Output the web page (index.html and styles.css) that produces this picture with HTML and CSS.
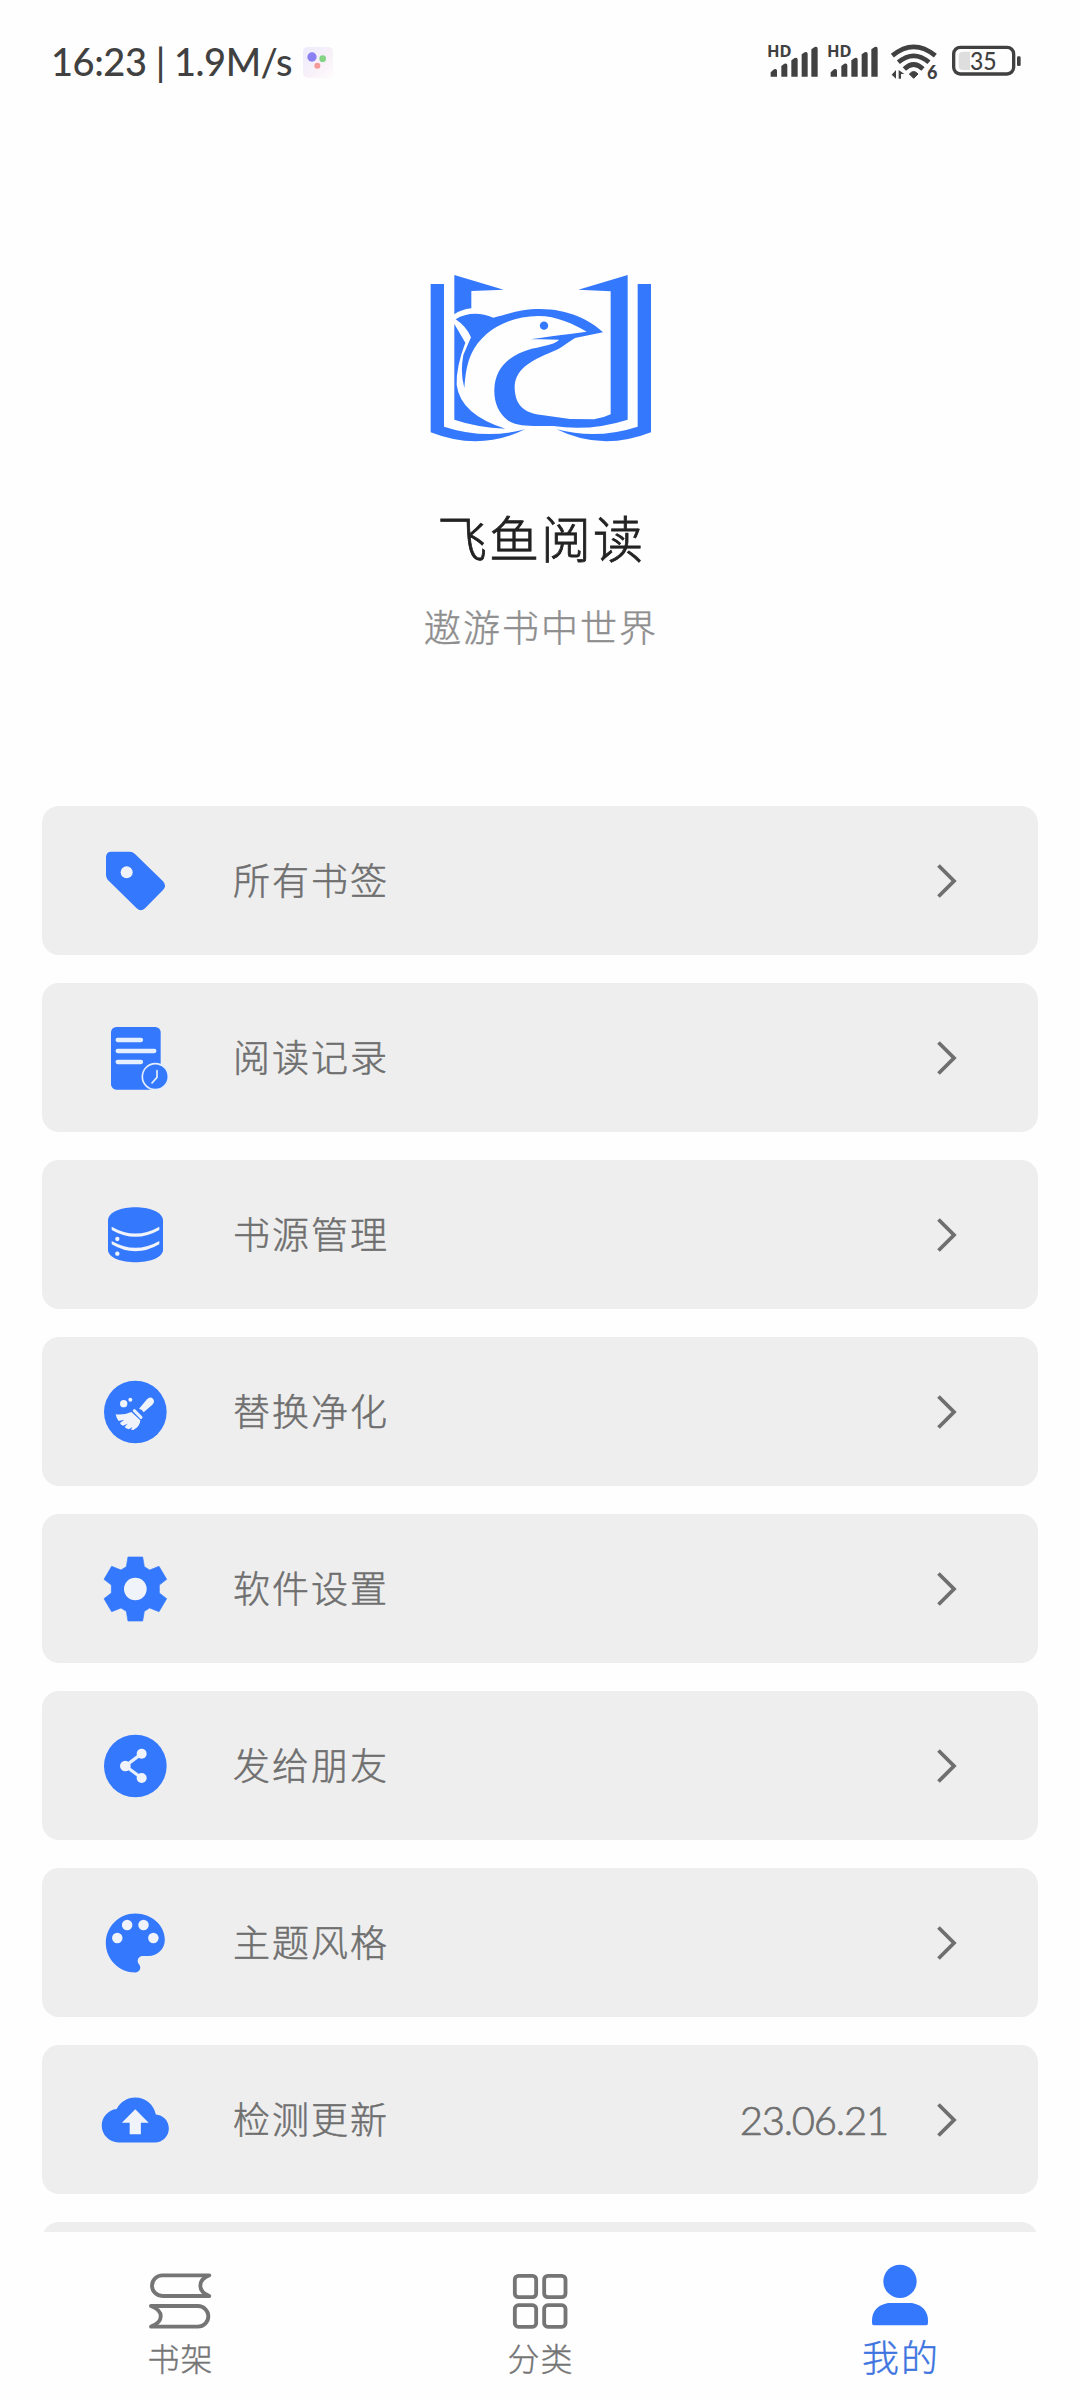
FILE: index.html
```html
<!DOCTYPE html>
<html lang="zh-CN">
<head>
<meta charset="utf-8">
<title>飞鱼阅读</title>
<link rel="stylesheet" href="styles.css">
</head>
<body>
<div class="app">
  <header class="status">
    <div class="status-left">
      <span class="clock">16:23 | 1.9M/s</span>
      <svg class="dots" viewBox="0 0 96 96">
        <defs><linearGradient id="tile" x1="0" y1="0" x2="1" y2="1"><stop offset="0" stop-color="#ecebff"/><stop offset=".6" stop-color="#f9f1f8"/><stop offset="1" stop-color="#fefcfc"/></linearGradient></defs>
        <rect width="90" height="92" rx="14" fill="url(#tile)"/>
        <circle cx="27" cy="30" r="14" fill="#8a80f2"/><circle cx="59" cy="35" r="10" fill="#84d486"/><circle cx="43" cy="56" r="9" fill="#f59a98"/>
      </svg>
    </div>
    <svg class="status-icons" viewBox="0 0 900 240">
      <g fill="#414141">
        <g id="sim">
          <text class="hd" x="51" y="110" textLength="74" lengthAdjust="spacingAndGlyphs">HD</text>
          <path d="M62 170V157L72 148Q81 144 81 153V170ZM94 170V138L103 131Q112 128 112 136V170ZM124 170V121L134 114Q143 111 143 119V170ZM155 170V103L164 97Q173 94 173 102V170ZM184 170V88L194 81Q203 78 203 87V170Z"/>
        </g>
        <use href="#sim" x="180"/>
        <path d="M491 175L478 162Q491 147 504 162Z" stroke="#414141" stroke-width="3"/>
        <path d="M438 150V176L425 164ZM446 176V150L463 162H453V176Z"/>
        <text class="six" x="531" y="178">6</text>
        <rect x="801" y="109" width="11" height="29" rx="4"/>
      </g>
      <g fill="none" stroke="#414141" stroke-width="14">
        <path d="M427 107Q491 54 556 107M445 127Q491 88 537 127M463 147Q491 120 519 147"/>
        <rect x="611" y="82" width="180" height="80" rx="20" stroke-width="10"/>
      </g>
      <path d="M640 95H660V150H640Q626 150 626 138V108Q626 95 640 95Z" fill="#dedede"/>
      <text class="pct" x="700" y="151" text-anchor="middle" textLength="80" lengthAdjust="spacingAndGlyphs">35</text>
    </svg>
  </header>

  <section class="hero">
    <svg class="logo" viewBox="0 0 780 600">
      <path d="M62 72H102V500Q225 540 345 508Q210 575 62 517Z"/>
      <path d="M723 72H683V500Q560 540 440 508Q575 575 723 517Z"/>
      <path d="M133 45L281 89L184 93V145Q152 149 133 163Z"/>
      <path d="M133 192L166 248Q138 320 140 375Q152 464 286 506Q200 502 133 479Z"/>
      <path d="M137 178C168 158 210 156 250 173C300 160 335 147 390 147C475 147 540 180 579 217L495 234C465 252 455 264 430 274C355 305 314 330 314 385C316 435 340 460 400 466L480 477L552 478Q580 474 602 463V94L505 89L653 45V479Q540 515 430 498C370 497 330 502 296 483C264 460 252 425 253 388C256 318 302 284 365 266C410 257 440 250 447 239Q405 237 362 238Q430 228 480 222L530 215C490 192 440 168 385 168C285 170 215 218 185 280C170 312 166 345 163 384Q150 340 160 285L183 232Q170 200 137 178Z"/>
      <circle cx="402" cy="197" r="12.5"/>
    </svg>
    <h1 class="title">飞鱼阅读</h1>
    <p class="subtitle">遨游书中世界</p>
  </section>

  <main class="list">
    <div class="card">
      <svg class="icon" viewBox="0 0 240 240"><path d="M49 32H104Q113 32 120 39L204 121Q216 134 204 147L150 202Q138 214 125 202L38 116Q33 110 33 102V49Q33 32 49 32Z"/><circle class="cut" cx="95" cy="94" r="18"/></svg>
      <span class="label">所有书签</span>
      <svg class="chevron" viewBox="0 0 20 34"><path d="M1.500 1.500L17 17L1.500 32.500"/></svg>
    </div>
    <div class="card">
      <svg class="icon" viewBox="0 0 240 240"><rect x="48" y="27" width="149" height="188" rx="16"/><path class="line" stroke-width="13" d="M68 66H138M68 99H178M68 132H138"/><circle cx="181" cy="176" r="39" stroke="#e4eeff" stroke-width="5"/><path class="line" stroke-width="5" d="M186 158V178L171 195"/></svg>
      <span class="label">阅读记录</span>
      <svg class="chevron" viewBox="0 0 20 34"><path d="M1.500 1.500L17 17L1.500 32.500"/></svg>
    </div>
    <div class="card">
      <svg class="icon" viewBox="0 0 240 240"><path d="M39 75C43 24 199 24 204 75V166C199 214 43 214 39 166Z"/><path class="cut" d="M50 95Q121 136 193 95V105Q121 146 50 105ZM50 138Q121 179 193 138V148Q121 190 50 148Z"/><circle class="cut" cx="67" cy="132" r="6.500"/><circle class="cut" cx="67" cy="176" r="6.500"/></svg>
      <span class="label">书源管理</span>
      <svg class="chevron" viewBox="0 0 20 34"><path d="M1.500 1.500L17 17L1.500 32.500"/></svg>
    </div>
    <div class="card">
      <svg class="icon" viewBox="0 0 240 240"><circle cx="121" cy="120" r="94"/><circle class="cut" cx="86" cy="95" r="11"/><circle class="cut" cx="106" cy="83" r="6"/><path class="cut" d="M132 110L156 82Q165 72 174 80Q181 89 172 98L146 121Q142 112 132 110Z"/><path class="line" stroke-width="9" d="M118 116L138 136"/><path class="cut" d="M109 120L136 145Q135 164 115 174L108 173L112 165L102 172Q91 169 89 165L98 155L84 161Q76 158 75 153L88 143L71 147Q64 139 62 127Q86 130 109 120Z"/></svg>
      <span class="label">替换净化</span>
      <svg class="chevron" viewBox="0 0 20 34"><path d="M1.500 1.500L17 17L1.500 32.500"/></svg>
    </div>
    <div class="card">
      <svg class="icon" viewBox="-121 -120 240 240"><path stroke="#3478fd" stroke-width="2" stroke-linejoin="round" d="M-22-96H22L27-67L43-57L71-68L94-29L72-12V12L94 29L71 68L43 57L27 67L22 96H-22L-27 67L-43 57L-71 68L-94 29L-72 12V-12L-94-29L-71-68L-43-57L-27-67Z"/><circle class="cut" r="34"/></svg>
      <span class="label">软件设置</span>
      <svg class="chevron" viewBox="0 0 20 34"><path d="M1.500 1.500L17 17L1.500 32.500"/></svg>
    </div>
    <div class="card">
      <svg class="icon" viewBox="-121 -120 240 240"><circle r="94"/><path class="line" stroke-width="10" d="M19-37L-30 0L19 36"/><circle class="cut" cx="19" cy="-37" r="15"/><circle class="cut" cx="-30" cy="0" r="16"/><circle class="cut" cx="19" cy="36" r="15"/></svg>
      <span class="label">发给朋友</span>
      <svg class="chevron" viewBox="0 0 20 34"><path d="M1.500 1.500L17 17L1.500 32.500"/></svg>
    </div>
    <div class="card">
      <svg class="icon" viewBox="-0.300 -0.200 24.400 24.400"><path d="M12 3c-4.970 0-9 4.030-9 9s4.030 9 9 9c.83 0 1.500-.67 1.500-1.500 0-.39-.15-.74-.39-1.010-.23-.26-.38-.61-.38-.99 0-.83.67-1.500 1.500-1.500H16c2.760 0 5-2.240 5-5 0-4.420-4.030-8-9-8z"/><g class="cut"><circle cx="6.500" cy="10.500" r="1.600"/><circle cx="9.500" cy="6.500" r="1.600"/><circle cx="14.500" cy="6.500" r="1.600"/><circle cx="17.500" cy="10.500" r="1.600"/></g></svg>
      <span class="label">主题风格</span>
      <svg class="chevron" viewBox="0 0 20 34"><path d="M1.500 1.500L17 17L1.500 32.500"/></svg>
    </div>
    <div class="card">
      <svg class="icon" viewBox="-2.400 -2.300 28.600 28.600"><path d="M19.350 10.040C18.670 6.590 15.640 4 12 4 9.110 4 6.600 5.640 5.350 8.040 2.340 8.360 0 10.910 0 14c0 3.310 2.690 6 6 6h13c2.760 0 5-2.240 5-5 0-2.640-2.050-4.780-4.650-4.960z"/><path class="cut" d="M14 13v4.100h-4v-4.100H7.200l4.800-4.800 4.800 4.800z"/></svg>
      <span class="label">检测更新</span>
      <span class="value">23.06.21</span>
      <svg class="chevron" viewBox="0 0 20 34"><path d="M1.500 1.500L17 17L1.500 32.500"/></svg>
    </div>
    <div class="card"></div>
  </main>

  <nav class="tabs">
    <a class="tab">
      <svg class="tab-icon" viewBox="0 0 240 240"><path class="outline" d="M208 64H67a31 31 0 0 0 0 62H208C172 112 172 78 208 64ZM33 156H174a31 31 0 0 1 0 62H33C72 204 72 170 33 156Z"/></svg>
      <span>书架</span>
    </a>
    <a class="tab">
      <svg class="tab-icon" viewBox="0 0 240 240"><g class="outline"><rect x="44.500" y="65.500" width="64" height="64" rx="11"/><rect x="132.500" y="65.500" width="64" height="64" rx="11"/><rect x="44.500" y="153.500" width="64" height="65" rx="11"/><rect x="132.500" y="153.500" width="64" height="65" rx="11"/></g></svg>
      <span>分类</span>
    </a>
    <a class="tab active">
      <svg class="tab-icon" viewBox="0 0 240 240"><circle cx="120" cy="82" r="50"/><path d="M36 206V198Q38 156 84 147H156Q202 156 204 198V206Q204 214 198 214H42Q36 214 36 206Z"/></svg>
      <span>我的</span>
    </a>
  </nav>
</div>
</body>
</html>
```

FILE: styles.css
```css
body {
  margin: 0;
  background: #fefefe;
  font-family: "Noto Sans CJK SC", sans-serif;
  font-weight: 300;
}

.app {
  display: flex;
  flex-direction: column;
  width: 1080px;
  height: 2400px;
  overflow: hidden;
}

.status {
  display: flex;
  justify-content: space-between;
  align-items: flex-start;
  height: 100px;
  padding: 20px 30px 0 51px;
  box-sizing: border-box;
}

.status-left {
  display: flex;
  gap: 12px;
}

.clock {
  width: 240px;
  font: 500 38px/82px Lato, sans-serif;
  letter-spacing: -.45px;
  color: #414141;
  white-space: nowrap;
}

.dots {
  width: 32px;
  height: 32px;
  margin-top: 27px;
}

.status-icons {
  width: 300px;
  height: 80px;
}

.hd {
  font: 700 48px "Noto Sans", sans-serif;
}

.six {
  font: 900 54px Lato, sans-serif;
}

.pct {
  font: 500 74px Lato, sans-serif;
  fill: #414141;
}

.hero {
  display: flex;
  flex-direction: column;
  align-items: center;
  height: 706px;
  padding-top: 160px;
  box-sizing: border-box;
}

.logo {
  width: 260px;
  height: 200px;
  fill: #3478fd;
}

.title {
  margin: 41px 0 0;
  font-size: 50px;
  font-weight: 300;
  line-height: 70px;
  letter-spacing: 2px;
  text-indent: 2px;
  color: #222;
  -webkit-text-stroke: .8px;
}

.subtitle {
  margin: 27px 0 0;
  font-size: 37px;
  line-height: 56px;
  letter-spacing: 2px;
  text-indent: 2px;
  color: #8e8e8e;
  -webkit-text-stroke: .4px;
}

.list {
  display: flex;
  flex-direction: column;
  gap: 28px;
  height: 1426px;
  padding: 0 42px;
  overflow: hidden;
}

.card {
  display: flex;
  flex: none;
  align-items: center;
  height: 149px;
  padding: 0 81px 0 53px;
  box-sizing: border-box;
  border-radius: 17px;
  background: #eee;
}

.icon {
  width: 80px;
  height: 80px;
  fill: #3478fd;
}

.cut {
  fill: #f0f3fa;
}

.line {
  fill: none;
  stroke: #e6effd;
  stroke-linecap: round;
  stroke-linejoin: round;
}

.label {
  flex: 1;
  margin-left: 58px;
  padding-bottom: 4px;
  font-size: 37px;
  line-height: 56px;
  letter-spacing: 2px;
  color: #6f6f6f;
  -webkit-text-stroke: .5px;
}

.value {
  margin-right: 49px;
  font: 300 40px/56px Lato, sans-serif;
  letter-spacing: -1.2px;
  color: #6f6f6f;
  -webkit-text-stroke: .7px;
}

.chevron {
  width: 20px;
  height: 34px;
  fill: none;
  stroke: #6f6f6f;
  stroke-width: 3.800;
}

.tabs {
  display: grid;
  grid-template-columns: repeat(3, 1fr);
  height: 168px;
}

.tab {
  display: flex;
  flex-direction: column;
  align-items: center;
  padding-top: 22px;
  font-size: 32px;
  line-height: 46px;
  letter-spacing: 1px;
  text-indent: 1px;
  color: #757575;
  -webkit-text-stroke: .4px;
}

.tab-icon {
  width: 80px;
  height: 80px;
  fill: #3478fd;
}

.outline {
  fill: none;
  stroke: #757575;
  stroke-width: 11.500;
  stroke-linejoin: round;
}

.active {
  font-size: 37px;
  line-height: 45px;
  letter-spacing: 2px;
  text-indent: 2px;
  color: #3d74e0;
}
```
